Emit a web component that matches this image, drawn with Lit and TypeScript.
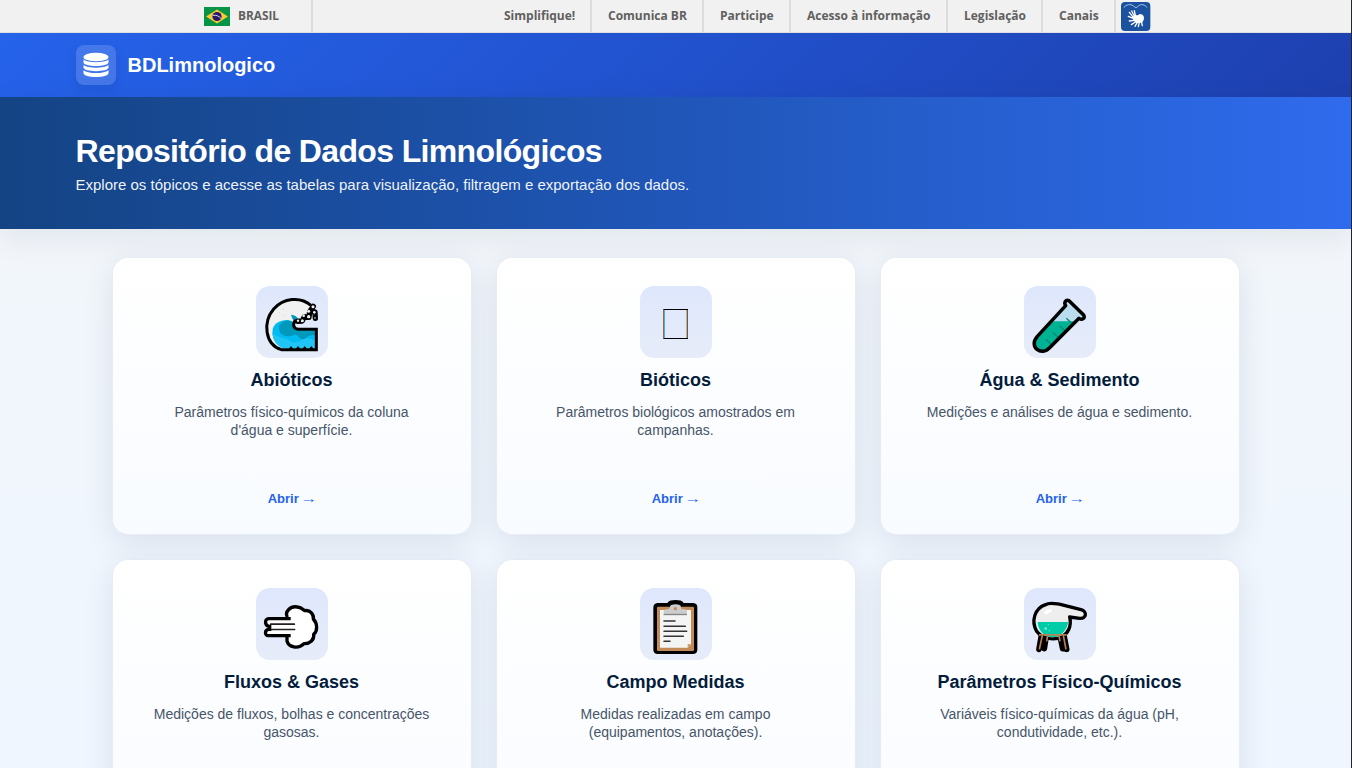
import { LitElement, html, css, svg } from "lit";
import { customElement } from "lit/decorators.js";

const wave = svg`
  <path d="M214 158V221H110C82 215 63 190 63 153C63 103 105 70 153 72C170 73 182 82 190 92L180 110L165 125L142 119L138 132C150 148 140 158 160 158Z" fill="#f1f1f1"/>
  <path d="M80 160C84 142 103 131 126 132L139 136L141 153L157 163H210V217H112C89 208 76 187 80 160Z" fill="#00bcf2"/>
  <path d="M98 154C101 134 126 129 141 139C137 153 147 163 160 164H210V180C190 170 183 191 169 190C158 188 154 174 145 176C132 184 112 182 102 170Z" fill="#0099bc"/>
  <path d="M79 171C98 188 117 184 130 194C153 209 172 183 187 187Q201 194 210 190V217H112C94 209 82 195 79 171Z" fill="#20c5f5"/>
  <path d="M135 116Q152 118 158 130L148 138Q139 132 135 116" fill="#0099bc"/>
  <path d="M108 98h5v5h-5zM99 108h3v3h-3zM112 116h4v4h-4z" fill="#ddd"/>
  <path d="M195 88C163 60 112 66 83 99C50 138 56 206 106 221H211V160H157C142 158 138 143 149 133" fill="none" stroke="#000" stroke-width="9"/>
  <path d="M147 222l9-12 9 12zM167 222l9-12 9 12zM187 222l9-12 9 12zM126 222l9-12 9 12z"/>
  <path d="M154 136L169 135L175 122L189 124L191 107L202 91M191 107L207 108L208 127" fill="none" stroke="#000" stroke-width="16" stroke-linecap="round" stroke-linejoin="round"/>
  <g fill="#f1f1f1"><circle cx="156" cy="134" r="3.500"/><circle cx="169" cy="134" r="4.500"/><circle cx="173" cy="119" r="4"/><circle cx="188" cy="122" r="5"/><circle cx="188" cy="106" r="4.500"/><circle cx="201" cy="92" r="4.500"/><circle cx="205" cy="109" r="4"/><circle cx="207" cy="126" r="2.500"/></g>
  <path d="M154 112L170 113L184 100L178 88L160 92Z" fill="#f1f1f1"/>`;

const missing = svg`
  <path d="M100 100.500H174M100 187.500H174" stroke="#000" stroke-width="3"/>
  <path d="M100.500 102V186" stroke="#9b6836" stroke-width="3"/>
  <path d="M172.500 102V186" stroke="#35699a" stroke-width="3"/>
  <path d="M103.500 102V186" stroke="#48a9ff" stroke-width="3"/>
  <path d="M169.500 102V186" stroke="#f2a34d" stroke-width="3"/>`;

const tube = svg`
  <path d="M154 88L70 182C49 208 78 237 105 216L198 127L211 122L160 72Z" fill="#b9dcef"/>
  <path d="M118 136H188L104 216C79 235 51 208 70 182Z" fill="#00b294"/>
  <path d="M157 127l16 15M137 149l16 16M117 169l16 16M96 190l16 16" stroke="#008a78" stroke-width="4"/>
  <path d="M155 89L70 181C42 213 83 242 107 215L195 127C205 134 214 126 209 117L165 74C155 70 149 80 155 89Z" fill="none" stroke="#000" stroke-width="10.500" stroke-linejoin="round"/>`;

const wind = svg`
  <path d="M128 118C117 101 134 83 154 86C165 87 170 93 176 97C193 94 204 111 202 122C216 137 216 159 204 170C206 187 190 197 175 197C158 215 128 208 123 188L126 173H66C56 173 57 158 68 154C55 149 54 126 65 123H128Z" fill="#fff"/>
  <path d="M134 122H68C55 122 56 142 68 145H76M134 173H67C55 173 56 155 68 154H76" fill="none" stroke="#000" stroke-width="10"/>
  <path d="M124 118C115 101 134 83 154 87C165 88 170 93 176 98C193 94 204 111 202 123C215 137 215 159 203 169C206 186 190 198 174 197C156 215 128 208 123 189V174" fill="none" stroke="#000" stroke-width="10" stroke-linejoin="round"/>
  <path d="M74 138.500H145M76 154.500H146" stroke="#222" stroke-width="5" stroke-linecap="round"/>`;

const clipboard = svg`
  <path d="M82 75H112C116 68 126 66 137 66S157 68 161 75H190Q202 76 202 88V216Q201 228 189 228H83Q71 228 70 216V88Q71 76 82 75Z"/>
  <rect x="81" y="86" width="111" height="133" rx="4" fill="#c18a58"/>
  <path d="M90 96H183V199L173 209H90Z" fill="#f4f4f4"/>
  <path d="M183 198H173V209Z" fill="#d19a68"/>
  <path d="M101 111V99Q102 94 110 94H117L122 82Q137 75 151 82L155 94H164Q171 94 171 100V111Z" fill="#ccc"/>
  <path d="M101 109.500H171" stroke="#858585" stroke-width="4"/>
  <circle cx="136" cy="92" r="5" fill="#c18a58"/>
  <path d="M102 129H135M102 144.500H166M102 159.500H170M102 175H160M102 190H120" stroke="#333" stroke-width="4.500" stroke-linecap="round"/>`;

const flask = svg`
  <path d="M82 173L75 214M97 173L91 212M138 173L146 212M150 173L158 214" stroke="#000" stroke-width="17" stroke-linecap="round"/>
  <path d="M95 80C106 72 124 77 139 79L201 95C221 100 217 124 197 121L167 117C174 145 161 167 144 176C118 190 83 180 68 160C51 130 61 91 95 80Z" fill="#eee" stroke="#000" stroke-width="10" stroke-linejoin="round"/>
  <path d="M71 132H162C161 151 146 171 126 177H106C84 170 72 154 71 132Z" fill="#00cca8"/>
  <path d="M89 106C94 96 102 94 113 93Q117 97 112 101L94 110Z" fill="#fff"/>
  <path d="M85 172L76 214M101 172L98 190M135 172L138 190M148 172L156 214" stroke="#bd8053" stroke-width="5"/>
  <path d="M75 170.500H158" stroke="#bd8053" stroke-width="5"/>
  <g fill="#72e7d3"><circle cx="95" cy="152" r="4"/><circle cx="106" cy="158" r="2"/><circle cx="103" cy="139" r="2"/></g>`;

const topics = [
  { icon: wave, title: "Abióticos", text: "Parâmetros físico-químicos da coluna d'água e superfície." },
  { icon: missing, title: "Bióticos", text: "Parâmetros biológicos amostrados em campanhas." },
  { icon: tube, title: "Água & Sedimento", text: "Medições e análises de água e sedimento." },
  { icon: wind, title: "Fluxos & Gases", text: "Medições de fluxos, bolhas e concentrações gasosas." },
  { icon: clipboard, title: "Campo Medidas", text: "Medidas realizadas em campo (equipamentos, anotações)." },
  { icon: flask, title: "Parâmetros Físico-Químicos", text: "Variáveis físico-químicas da água (pH, condutividade, etc.)." },
];

@customElement("app-root")
export class AppRoot extends LitElement {
  static styles = css`
    :host {
      display: block;
      box-sizing: border-box;
      height: 768px;
      overflow: hidden;
      border-right: 1px solid #22252c;
      font-family: "Liberation Sans", Arial, sans-serif;
      background: linear-gradient(180deg, #f3f6f9, #eff6ff 768px);
    }
    * { box-sizing: border-box; }
    .gov {
      height: 33px;
      display: flex;
      justify-content: space-between;
      padding: 0 200px 0 204px;
      background: #f1f1f1;
      border-bottom: 1px solid #dfdfdf;
      font: 700 12px/32px "Open Sans", sans-serif;
      color: #606060;
    }
    .brasil {
      display: flex;
      align-items: center;
      gap: 8px;
      width: 109px;
      border-right: 2px solid #dcdcdc;
      font-size: 12px;
    }
    .brasil span { transform: scaleX(0.985); transform-origin: left; }
    .links { display: grid; grid-template-columns: 104px 112px 87px 157px 95px 73px 35px; }
    .links a { padding-left: 16px; border-right: 2px solid #dcdcdc; white-space: nowrap; }
    .vlibras { display: block; margin: 2px 0 0 5px; }
    .header {
      height: 64px;
      background: linear-gradient(135deg, #2563eb, #1e40af);
      color: #fff;
    }
    .inner { width: 1200px; margin: 0 auto; }
    .brand { height: 64px; display: flex; align-items: center; gap: 12px; font-size: 20px; font-weight: 700; }
    .logo {
      width: 40px;
      height: 40px;
      border-radius: 8px;
      background: rgba(255, 255, 255, 0.15);
      box-shadow: 0 4px 12px rgba(0, 0, 0, 0.08);
      display: grid;
      place-items: center;
    }
    .hero {
      position: relative;
      height: 132px;
      padding-top: 35px;
      background: linear-gradient(90deg, #144484 0%, #2056b8 50%, #2f6bed 100%);
      box-shadow: 0 8px 30px rgba(15, 23, 42, 0.08);
      color: #fff;
    }
    .hero h1 { margin: 0; font-size: 32px; line-height: 38px; letter-spacing: -0.64px; }
    .hero p { margin: 6px 0 0; font-size: 15px; line-height: 18px; color: rgba(255, 255, 255, 0.95); }
    .grid {
      width: 1128px;
      margin: 28px auto 0;
      display: grid;
      grid-template-columns: repeat(3, 1fr);
      grid-auto-rows: 278px;
      gap: 24px;
    }
    .card {
      display: flex;
      flex-direction: column;
      align-items: center;
      padding: 28px 28px 26px;
      border: 1px solid rgba(15, 23, 42, 0.04);
      border-radius: 16px;
      background: linear-gradient(180deg, #fff, #f8fbff) padding-box;
      box-shadow: 0 8px 30px rgba(15, 40, 80, 0.1);
      text-align: center;
    }
    .tile {
      flex: none;
      width: 72px;
      height: 72px;
      border-radius: 14px;
      background: linear-gradient(180deg, #dfe7fd, #e6ecf8);
    }
    .tile svg { display: block; }
    .card h3 { margin: 12px 0 0; font-size: 18px; line-height: 20px; color: #041c3c; white-space: nowrap; }
    .card p { width: 278px; margin: 13px 0 0; font-size: 14px; line-height: 18px; color: #475569; }
    .open { margin-top: auto; font-size: 13px; line-height: 18px; font-weight: 700; color: #2563eb; }
    .open span { display: inline-block; font-weight: 400; transform: scaleX(1.3); }
  `;

  render() {
    return html`
      <div class="gov">
        <div class="brasil">
          <svg width="26" height="19" viewBox="0 0 26 19">
            <rect width="26" height="19" fill="#089447" />
            <path d="M13 2.400L24 9.500L13 16.600L2 9.500Z" fill="#f8c932" />
            <circle cx="13" cy="9.500" r="4.600" fill="#28166f" />
            <path d="M8.800 8.300Q14 7.700 17 11.500" fill="none" stroke="#dce4ec" stroke-width="1" />
          </svg>
          <span>BRASIL</span>
        </div>
        <nav class="links">
          ${["Simplifique!", "Comunica BR", "Participe", "Acesso à informação", "Legislação", "Canais"].map((t) => html`<a>${t}</a>`)}
          <svg class="vlibras" width="30" height="29" viewBox="0 0 90 87">
            <rect width="88" height="87" rx="12" fill="#1c519f" />
            <path d="M8 17Q22 1 38 12L45 18L53 11Q66 2 79 17" fill="none" stroke="#9fbcdf" stroke-width="3" />
            <path d="M36 43L44 38Q50 42 56 36Q66 36 69 46Q70 56 63 62L46 63L36 55Z" fill="#fff" />
            <path d="M37 46L25 31M40 42L32 27M43 41L40 26M37 49L22 43M39 55L25 57M43 60L31 68M49 61L42 73M55 60L52 74M61 58L64 71" stroke="#fff" stroke-width="4" stroke-linecap="round" />
          </svg>
        </nav>
      </div>
      <header class="header">
        <div class="inner brand">
          <div class="logo">
            <svg width="26" height="26" viewBox="0 0 26 26" fill="#fff">
              <ellipse cx="13" cy="5" rx="12.500" ry="4.300" />
              <path d="M.5 7.500Q4 10.300 13 10.300T25.500 7.500V10.300C25.500 15.300.5 15.300.5 10.300Z" />
              <path d="M.5 13Q4 15.800 13 15.800T25.500 13V15.600C25.500 20.300.5 20.300.5 15.600Z" />
              <path d="M.5 18.200Q4 21 13 21T25.500 18.200V21C25.500 26.300.5 26.300.5 21Z" />
            </svg>
          </div>
          <span>BDLimnologico</span>
        </div>
      </header>
      <section class="hero">
        <div class="inner">
          <h1>Repositório de Dados Limnológicos</h1>
          <p>Explore os tópicos e acesse as tabelas para visualização, filtragem e exportação dos dados.</p>
        </div>
      </section>
      <main class="grid">
        ${topics.map(
          (t) => html`<article class="card">
            <div class="tile"><svg width="72" height="72" viewBox="30 30 216 216">${t.icon}</svg></div>
            <h3>${t.title}</h3>
            <p>${t.text}</p>
            <a class="open">Abrir <span>→</span></a>
          </article>`
        )}
      </main>
    `;
  }
}
